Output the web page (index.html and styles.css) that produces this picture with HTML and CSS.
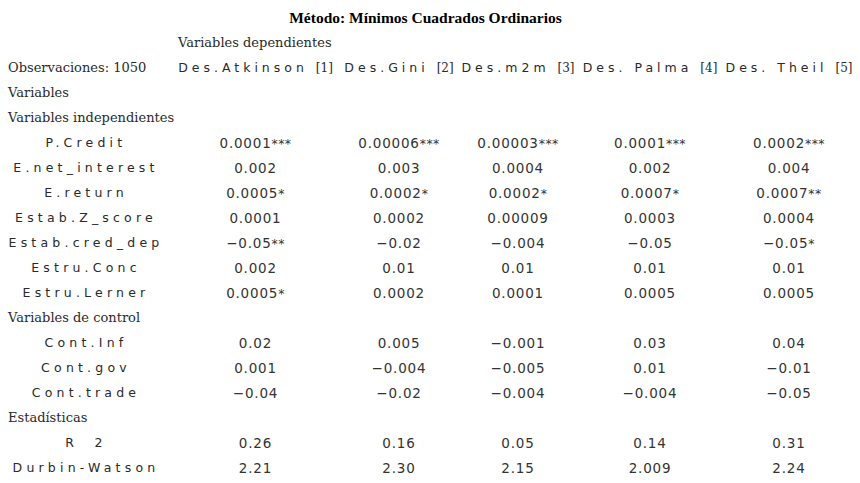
FILE: index.html
```html
<!DOCTYPE html>
<html lang="es">
<head>
<meta charset="utf-8">
<title>Método: Mínimos Cuadrados Ordinarios</title>
<link rel="stylesheet" href="styles.css">
</head>
<body>
<div class="table">
  <div class="row title-row"><div class="title">Método: Mínimos Cuadrados Ordinarios</div></div>
  <div class="row"><div class="c0"></div><div class="dep">Variables dependientes</div></div>
  <div class="row">
    <div class="c0 left">Observaciones: 1050</div>
    <div class="hd">Des.Atkinson <span class="br">[1]</span></div>
    <div class="hd">Des.Gini <span class="br">[2]</span></div>
    <div class="hd">Des.m2m <span class="br">[3]</span></div>
    <div class="hd">Des. Palma <span class="br">[4]</span></div>
    <div class="hd">Des. Theil <span class="br">[5]</span></div>
  </div>
  <div class="row"><div class="c0 left">Variables</div></div>
  <div class="row"><div class="c0 left">Variables independientes</div></div>
  <div class="row"><div class="c0 lbl">P.Credit</div><div class="n">0.0001<span class="s">***</span></div><div class="n">0.00006<span class="s">***</span></div><div class="n">0.00003<span class="s">***</span></div><div class="n">0.0001<span class="s">***</span></div><div class="n">0.0002<span class="s">***</span></div></div>
  <div class="row"><div class="c0 lbl">E.net_interest</div><div class="n">0.002</div><div class="n">0.003</div><div class="n">0.0004</div><div class="n">0.002</div><div class="n">0.004</div></div>
  <div class="row"><div class="c0 lbl">E.return</div><div class="n">0.0005<span class="s">*</span></div><div class="n">0.0002<span class="s">*</span></div><div class="n">0.0002<span class="s">*</span></div><div class="n">0.0007<span class="s">*</span></div><div class="n">0.0007<span class="s">**</span></div></div>
  <div class="row"><div class="c0 lbl">Estab.Z_score</div><div class="n">0.0001</div><div class="n">0.0002</div><div class="n">0.00009</div><div class="n">0.0003</div><div class="n">0.0004</div></div>
  <div class="row"><div class="c0 lbl">Estab.cred_dep</div><div class="n">−0.05<span class="s">**</span></div><div class="n">−0.02</div><div class="n">−0.004</div><div class="n">−0.05</div><div class="n">−0.05<span class="s">*</span></div></div>
  <div class="row"><div class="c0 lbl">Estru.Conc</div><div class="n">0.002</div><div class="n">0.01</div><div class="n">0.01</div><div class="n">0.01</div><div class="n">0.01</div></div>
  <div class="row"><div class="c0 lbl">Estru.Lerner</div><div class="n">0.0005<span class="s">*</span></div><div class="n">0.0002</div><div class="n">0.0001</div><div class="n">0.0005</div><div class="n">0.0005</div></div>
  <div class="row"><div class="c0 left">Variables de control</div></div>
  <div class="row"><div class="c0 lbl">Cont.Inf</div><div class="n">0.02</div><div class="n">0.005</div><div class="n">−0.001</div><div class="n">0.03</div><div class="n">0.04</div></div>
  <div class="row"><div class="c0 lbl">Cont.gov</div><div class="n">0.001</div><div class="n">−0.004</div><div class="n">−0.005</div><div class="n">0.01</div><div class="n">−0.01</div></div>
  <div class="row"><div class="c0 lbl">Cont.trade</div><div class="n">−0.04</div><div class="n">−0.02</div><div class="n">−0.004</div><div class="n">−0.004</div><div class="n">−0.05</div></div>
  <div class="row"><div class="c0 left">Estadísticas</div></div>
  <div class="row"><div class="c0 lbl">R&nbsp; 2</div><div class="n">0.26</div><div class="n">0.16</div><div class="n">0.05</div><div class="n">0.14</div><div class="n">0.31</div></div>
  <div class="row"><div class="c0 lbl">Durbin-Watson</div><div class="n">2.21</div><div class="n">2.30</div><div class="n">2.15</div><div class="n">2.009</div><div class="n">2.24</div></div>
</div>
</body>
</html>
```
FILE: styles.css
```css
html, body {
  margin: 0;
  padding: 0;
  background: #ffffff;
  color: #000000;
}
body {
  font-family: "DejaVu Serif", "Liberation Serif", serif;
  font-size: 13px;
}
.table {
  width: 855px;
  padding-top: 5px;
}
.row {
  display: grid;
  grid-template-columns: 172px 167px 120px 118px 146px 132px;
  height: 25px;
  align-items: center;
  white-space: nowrap;
}
.title-row {
  display: flex;
  justify-content: center;
  width: 851px;
}
.title {
  font-family: "Liberation Serif", serif;
  font-weight: bold;
  font-size: 15.5px;
}
.c0 {
  text-align: center;
}
.left {
  text-align: left;
  padding-left: 8px;
  color: #2a2a2a;
}
.dep {
  grid-column: 2 / span 3;
  padding-left: 6px;
  color: #2a2a2a;
}
.hd {
  text-align: center;
  font-family: "DejaVu Sans", sans-serif;
  letter-spacing: 4px;
  font-size: 12.5px;
  color: #2a2a2a;
}
.br {
  font-family: "DejaVu Serif", serif;
  font-size: 12px;
  letter-spacing: 0;
}
.lbl {
  font-family: "DejaVu Sans", sans-serif;
  letter-spacing: 4.2px;
  font-size: 12.5px;
  color: #2a2a2a;
}
.n {
  text-align: center;
  font-family: "DejaVu Sans", sans-serif;
  font-size: 13.5px;
  letter-spacing: 0.8px;
  color: #333;
}
.s {
  font-size: 12.5px;
  letter-spacing: 0.4px;
}
```
